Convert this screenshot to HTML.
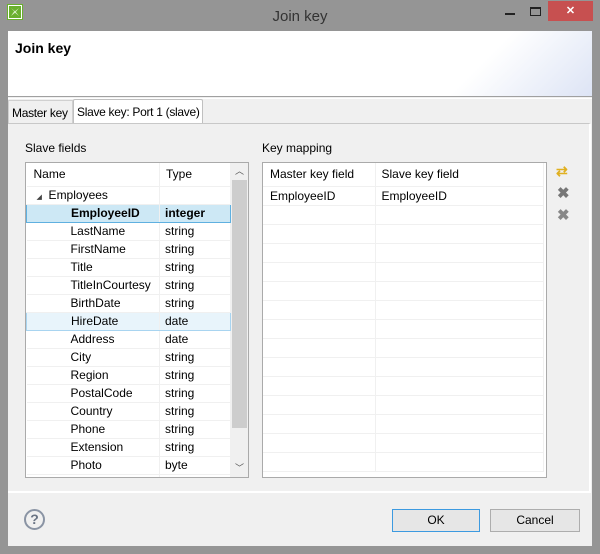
<!DOCTYPE html>
<html><head><style>
*{box-sizing:border-box;margin:0;padding:0}
body{width:600px;height:554px;background:#959595;font-family:"Liberation Sans",sans-serif;font-size:12px;color:#000;position:relative;overflow:hidden}
.a{position:absolute;white-space:nowrap}
.t td{height:18px;border-bottom:1px solid #f0f0f0;border-right:1px solid #f0f0f0;padding:0 0 0 4px;white-space:nowrap;font-size:12px}
table{border-collapse:collapse}
</style></head><body>
<div class="a" style="left:8px;top:5px;width:14px;height:14px;background:#6ab02e;border:1px solid #fff;outline:1px solid #6ab02e"></div>
<div class="a" style="left:11px;top:8px;width:8px;height:8px;background:#d8efc4;clip-path:polygon(0 0,40% 40%,0 100%,50% 60%,100% 100%,60% 50%,100% 0,50% 40%)"></div>
<div class="a" style="left:0;top:8px;width:600px;text-align:center;font-size:15px;color:#333">Join key</div>
<div class="a" style="left:505px;top:13px;width:10px;height:2px;background:#222"></div>
<div class="a" style="left:530px;top:7px;width:11px;height:9px;border:1px solid #222;border-top-width:2px"></div>
<div class="a" style="left:548px;top:1px;width:45px;height:20px;background:#c75050;color:#fff;text-align:center;font-size:11px;font-weight:bold;line-height:20px">✕</div>
<div class="a" style="left:8px;top:31px;width:584px;height:515px;background:#f0f0f0"></div>
<div class="a" style="left:8px;top:31px;width:584px;height:66px;background:linear-gradient(135deg,#fff 0%,#fff 78%,#dde4f5 100%);border-bottom:1px solid #a0a0a0"></div>
<div class="a" style="left:15px;top:40px;font-size:14px;font-weight:bold">Join key</div>
<div class="a" style="left:8px;top:98px;width:584px;height:1px;background:#fff"></div>
<div class="a" style="left:8px;top:100px;width:65px;height:23px;border:1px solid #d0d0d0;border-bottom:none;padding:5px 0 0 3px;letter-spacing:-0.3px">Master key</div>
<div class="a" style="left:73px;top:99px;width:130px;height:25px;background:#fff;border:1px solid #c0c0c0;border-bottom:none;border-radius:2px 2px 0 0;padding:5px 0 0 3px;letter-spacing:-0.3px;overflow:hidden">Slave key: Port 1 (slave)</div>
<div class="a" style="left:8px;top:123px;width:583px;height:370px;border-top:1px solid #c8c8c8;border-bottom:2px solid #fff;border-right:2px solid #fff"></div>
<div class="a" style="left:25px;top:141px">Slave fields</div>
<div class="a" style="left:262px;top:141px">Key mapping</div>
<div class="a" style="left:25px;top:162px;width:224px;height:316px;background:#fff;border:1px solid #aaa;overflow:hidden">
<table class="t" style="width:205px">
<tr><td style="height:23px;width:133px;padding-left:7px">Name</td><td style="padding-left:6px">Type</td></tr>
<tr><td style="padding-left:10px"><span style="font-size:7px;color:#444">◢</span> &nbsp;Employees</td><td></td></tr>
<tr style="background:#cde8f5;font-weight:bold"><td style="padding-left:44px;border:1px solid #5fb0e0;border-right:1px solid #f0f0f0;font-weight:bold">EmployeeID</td><td style="border:1px solid #5fb0e0;border-left:none;padding-left:5px;font-weight:bold">integer</td></tr>
<tr><td style="padding-left:44px">LastName</td><td style="padding-left:5px">string</td></tr>
<tr><td style="padding-left:44px">FirstName</td><td style="padding-left:5px">string</td></tr>
<tr><td style="padding-left:44px">Title</td><td style="padding-left:5px">string</td></tr>
<tr><td style="padding-left:44px">TitleInCourtesy</td><td style="padding-left:5px">string</td></tr>
<tr><td style="padding-left:44px">BirthDate</td><td style="padding-left:5px">string</td></tr>
<tr style="background:#e8f4fb"><td style="padding-left:44px;border:1px solid #a8d4f0;border-right:1px solid #f0f0f0">HireDate</td><td style="border:1px solid #a8d4f0;border-left:none;padding-left:5px">date</td></tr>
<tr><td style="padding-left:44px">Address</td><td style="padding-left:5px">date</td></tr>
<tr><td style="padding-left:44px">City</td><td style="padding-left:5px">string</td></tr>
<tr><td style="padding-left:44px">Region</td><td style="padding-left:5px">string</td></tr>
<tr><td style="padding-left:44px">PostalCode</td><td style="padding-left:5px">string</td></tr>
<tr><td style="padding-left:44px">Country</td><td style="padding-left:5px">string</td></tr>
<tr><td style="padding-left:44px">Phone</td><td style="padding-left:5px">string</td></tr>
<tr><td style="padding-left:44px">Extension</td><td style="padding-left:5px">string</td></tr>
<tr><td style="padding-left:44px">Photo</td><td style="padding-left:5px">byte</td></tr>
<tr><td></td><td></td></tr>
</table>
<div class="a" style="left:205px;top:0;width:17px;height:314px;background:#f0f0f0"></div>
<div class="a" style="left:206px;top:17px;width:15px;height:248px;background:#cdcdcd"></div>
<div class="a" style="left:205px;top:1px;width:17px;text-align:center;font-size:9px;color:#555">︿</div>
<div class="a" style="left:205px;top:298px;width:17px;text-align:center;font-size:9px;color:#555">﹀</div>
</div>
<div class="a" style="left:262px;top:162px;width:285px;height:316px;background:#fff;border:1px solid #aaa;overflow:hidden">
<table class="t" style="width:281px">
<tr><td style="height:23px;width:112px;padding-left:7px">Master key field</td><td style="padding-left:6px">Slave key field</td></tr>
<tr><td style="padding-left:7px;height:19px">EmployeeID</td><td style="padding-left:6px">EmployeeID</td></tr>
<tr><td style="height:19px"></td><td></td></tr><tr><td style="height:19px"></td><td></td></tr><tr><td style="height:19px"></td><td></td></tr><tr><td style="height:19px"></td><td></td></tr><tr><td style="height:19px"></td><td></td></tr><tr><td style="height:19px"></td><td></td></tr><tr><td style="height:19px"></td><td></td></tr><tr><td style="height:19px"></td><td></td></tr><tr><td style="height:19px"></td><td></td></tr><tr><td style="height:19px"></td><td></td></tr><tr><td style="height:19px"></td><td></td></tr><tr><td style="height:19px"></td><td></td></tr><tr><td style="height:19px"></td><td></td></tr><tr><td style="height:19px"></td><td></td></tr>
</table>
</div>
<div class="a" style="left:556px;top:163px;font-size:14px;color:#e0b020;font-weight:bold">⇄</div>
<div class="a" style="left:557px;top:184px;font-size:15px;color:#777;font-weight:bold">✖</div>
<div class="a" style="left:557px;top:206px;font-size:15px;color:#888;font-weight:bold">✖</div>
<div class="a" style="left:24px;top:509px;width:21px;height:21px;border:2px solid #8a94a4;border-radius:50%;text-align:center;font-weight:bold;font-size:14px;line-height:17px;color:#6a7484">?</div>
<div class="a" style="left:392px;top:509px;width:88px;height:23px;border:1px solid #3c9ae0;background:#e6e6e6;text-align:center;line-height:21px">OK</div>
<div class="a" style="left:490px;top:509px;width:90px;height:23px;border:1px solid #adadad;background:#e6e6e6;text-align:center;line-height:21px">Cancel</div>
</body></html>
